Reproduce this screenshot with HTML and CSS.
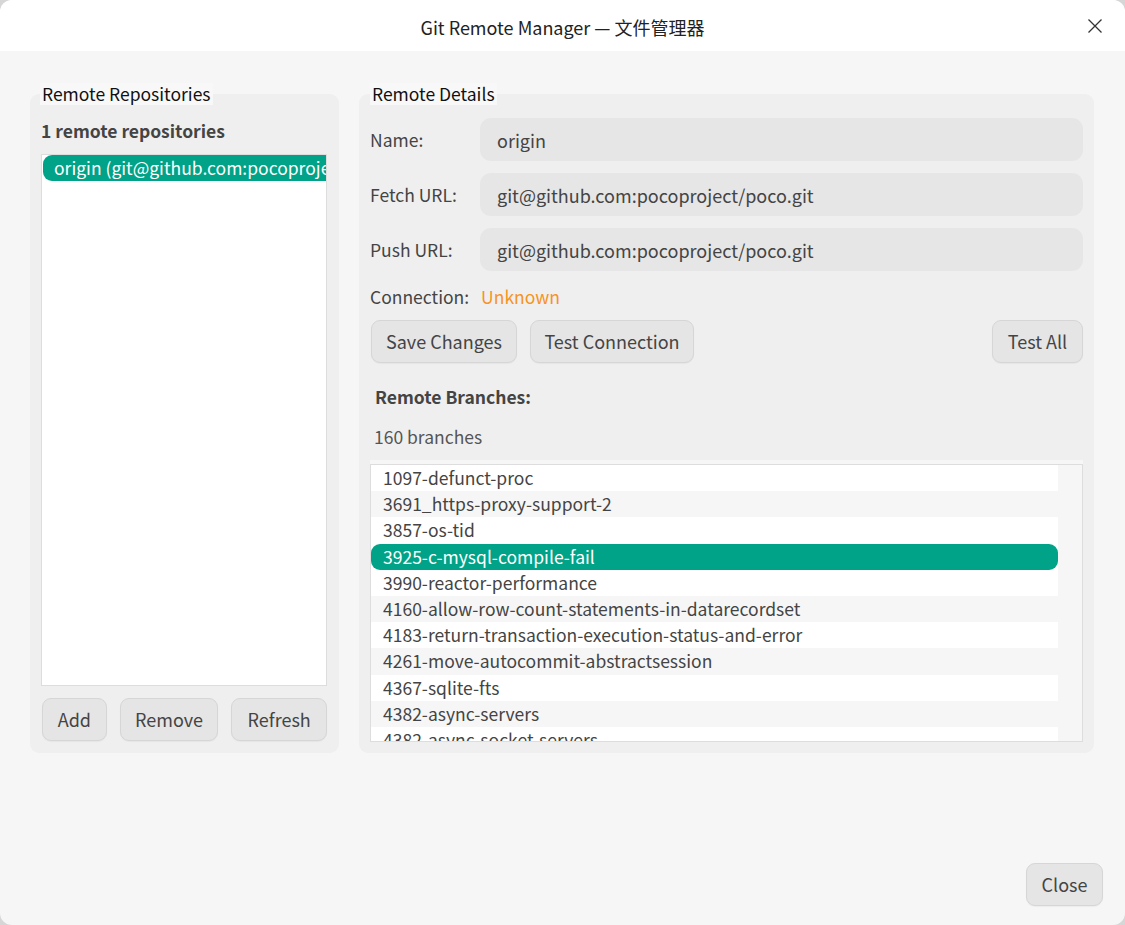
FILE: index.html
```html
<!DOCTYPE html>
<html lang="en">
<head>
<meta charset="utf-8">
<title>Git Remote Manager</title>
<link rel="stylesheet" href="styles.css">
</head>
<body>
<div class="window">
  <header class="titlebar">
    <span></span>
    <h1 class="title">Git Remote Manager — 文件管理器</h1>
    <button class="close-x" aria-label="Close">
      <svg width="16" height="16" viewBox="0 0 16 16"><path d="M1.5 1.5 L14.5 14.5 M14.5 1.5 L1.5 14.5" stroke="#333" stroke-width="1.3" fill="none"/></svg>
    </button>
  </header>
  <main class="content">
    <div class="panels">
      <section class="group group-left">
        <div class="group-title">Remote Repositories</div>
        <div class="count">1 remote repositories</div>
        <div class="repo-list">
          <div class="repo-item selected">origin (git@github.com:pocoproject/poco.git)</div>
        </div>
        <div class="btn-row">
          <button class="btn">Add</button>
          <button class="btn">Remove</button>
          <button class="btn">Refresh</button>
        </div>
      </section>
      <section class="group group-right">
        <div class="group-title">Remote Details</div>
        <div class="form">
          <label class="lbl">Name:</label>
          <div class="input">origin</div>
          <label class="lbl">Fetch URL:</label>
          <div class="input">git@github.com:pocoproject/poco.git</div>
          <label class="lbl">Push URL:</label>
          <div class="input">git@github.com:pocoproject/poco.git</div>
        </div>
        <div class="conn"><span class="lbl">Connection:</span><span class="unknown">Unknown</span></div>
        <div class="actions">
          <button class="btn">Save Changes</button>
          <button class="btn">Test Connection</button>
          <span class="grow"></span>
          <button class="btn">Test All</button>
        </div>
        <div class="branches-h">Remote Branches:</div>
        <div class="branches-count">160 branches</div>
        <div class="branch-wrap">
          <div class="branch-box">
            <div class="branch-list">
              <div class="row">1097-defunct-proc</div>
              <div class="row alt">3691_https-proxy-support-2</div>
              <div class="row">3857-os-tid</div>
              <div class="row selected">3925-c-mysql-compile-fail</div>
              <div class="row">3990-reactor-performance</div>
              <div class="row alt">4160-allow-row-count-statements-in-datarecordset</div>
              <div class="row">4183-return-transaction-execution-status-and-error</div>
              <div class="row alt">4261-move-autocommit-abstractsession</div>
              <div class="row">4367-sqlite-fts</div>
              <div class="row alt">4382-async-servers</div>
              <div class="row">4382-async-socket-servers</div>
            </div>
            <div class="scroll-track"></div>
          </div>
        </div>
      </section>
    </div>
    <footer class="footer">
      <button class="btn">Close</button>
    </footer>
  </main>
</div>
</body>
</html>
```
FILE: styles.css
```css
* { box-sizing: border-box; }
html, body { margin: 0; padding: 0; }
body {
  background: #d6d6d6;
  font-family: "Noto Sans CJK SC", "Noto Sans", sans-serif;
  color: #444;
}
.window {
  width: 1125px;
  height: 925px;
  border-radius: 12px;
  overflow: hidden;
  display: flex;
  flex-direction: column;
  background: #f6f6f6;
}
.titlebar {
  height: 51px;
  background: #ffffff;
  display: grid;
  grid-template-columns: 1fr auto 1fr;
  align-items: center;
}
.title {
  margin: 0;
  font-size: 18px;
  font-weight: 400;
  color: #222;
  line-height: 24px;
  padding-top: 2px;
}
.close-x {
  justify-self: end;
  margin-right: 22px;
  border: 0;
  background: transparent;
  padding: 0;
  width: 16px;
  height: 16px;
  display: flex;
}
.content {
  flex: 1;
  display: flex;
  flex-direction: column;
  padding: 43px 31px 19px 30px;
}
.panels {
  display: flex;
  gap: 20px;
  height: 659px;
}
.group {
  background: #efefef;
  border-radius: 9px;
  display: flex;
  flex-direction: column;
  min-height: 0;
}
.group-left { width: 309px; padding: 0 12px 12px 11px; }
.group-right { flex: 1; padding: 0 11px 11px 11px; }
.group-title {
  align-self: flex-start;
  margin-top: -11px;
  margin-left: -1px;
  padding: 0 2px;
  height: 22px;
  line-height: 22px;
  font-size: 17.5px;
  color: #111;
  background: #f8f8f8;
}
.group-right .group-title { margin-left: 0; }
.count {
  margin-top: 14px;
  font-weight: 700;
  font-size: 17.5px;
  line-height: 24px;
  color: #444;
}
.repo-list {
  margin-top: 11px;
  flex: 1;
  min-height: 0;
  background: #fff;
  border: 1px solid #dddddd;
  overflow: hidden;
}
.repo-item {
  height: 26px;
  line-height: 26px;
  font-size: 17.5px;
  white-space: nowrap;
  padding-left: 11px;
  margin-left: 1px;
}
.repo-item.selected {
  background: #00a387;
  color: #fff;
  border-radius: 9px 0 0 9px;
}
.btn-row {
  display: flex;
  gap: 13px;
  margin-top: 12px;
  padding-left: 1px;
}
.btn {
  font-family: inherit;
  font-size: 18px;
  color: #444;
  background: #e5e5e5;
  border: 1px solid #d6d6d6;
  border-radius: 9px;
  height: 43px;
  padding: 0 0 2px 0;
  line-height: 38px;
  white-space: nowrap;
  text-align: center;
  box-shadow: 0 1px 1px rgba(0,0,0,0.04);
}
.group-left .btn-row .btn:nth-child(1) { width: 65px; }
.group-left .btn-row .btn:nth-child(2) { width: 99px; }
.group-left .btn-row .btn:nth-child(3) { width: 96px; }
.form {
  margin-top: 13px;
  display: grid;
  grid-template-columns: 110px 1fr;
  row-gap: 12px;
  align-items: center;
}
.lbl { font-size: 17.5px; color: #444; }
.input {
  height: 43px;
  line-height: 42px;
  padding-top: 1px;
  background: #e6e6e6;
  border-radius: 11px;
  padding-left: 17px;
  font-size: 18px;
  color: #444;
}
.conn {
  margin-top: 15px;
  line-height: 22px;
  display: flex;
  gap: 12px;
  font-size: 17.5px;
}
.unknown { color: #f7931e; }
.actions {
  margin-top: 12px;
  display: flex;
  gap: 13px;
  padding-left: 1px;
}
.actions .btn:nth-child(1) { width: 146px; }
.actions .btn:nth-child(2) { width: 164px; }
.actions .btn:nth-child(4) { width: 91px; }
.grow { flex: 1; }
.branches-h {
  margin-top: 23px;
  padding-left: 5px;
  font-weight: 700;
  font-size: 17.5px;
  line-height: 22px;
  color: #444;
}
.branches-count {
  margin-top: 18px;
  padding-left: 4px;
  font-size: 17.5px;
  line-height: 22px;
  color: #555;
}
.branch-wrap {
  margin-top: 12px;
  flex: 1;
  min-height: 0;
  background: #f6f6f6;
  padding-top: 4px;
  display: flex;
}
.branch-box {
  flex: 1;
  border: 1px solid #dddddd;
  display: flex;
  overflow: hidden;
  background: #fff;
}
.branch-list { flex: 1; overflow: hidden; }
.scroll-track { width: 24px; background: #f6f6f6; }
.row {
  height: 26.2px;
  line-height: 26px;
  padding-left: 12px;
  font-size: 17.5px;
  color: #444;
  white-space: nowrap;
}
.row.alt { background: #f6f6f6; }
.row.selected { background: #00a387; color: #fff; border-radius: 9px; }
.footer {
  margin-top: auto;
  display: flex;
  justify-content: flex-end;
  margin-right: -9px;
}
.footer .btn { width: 77px; }
```
